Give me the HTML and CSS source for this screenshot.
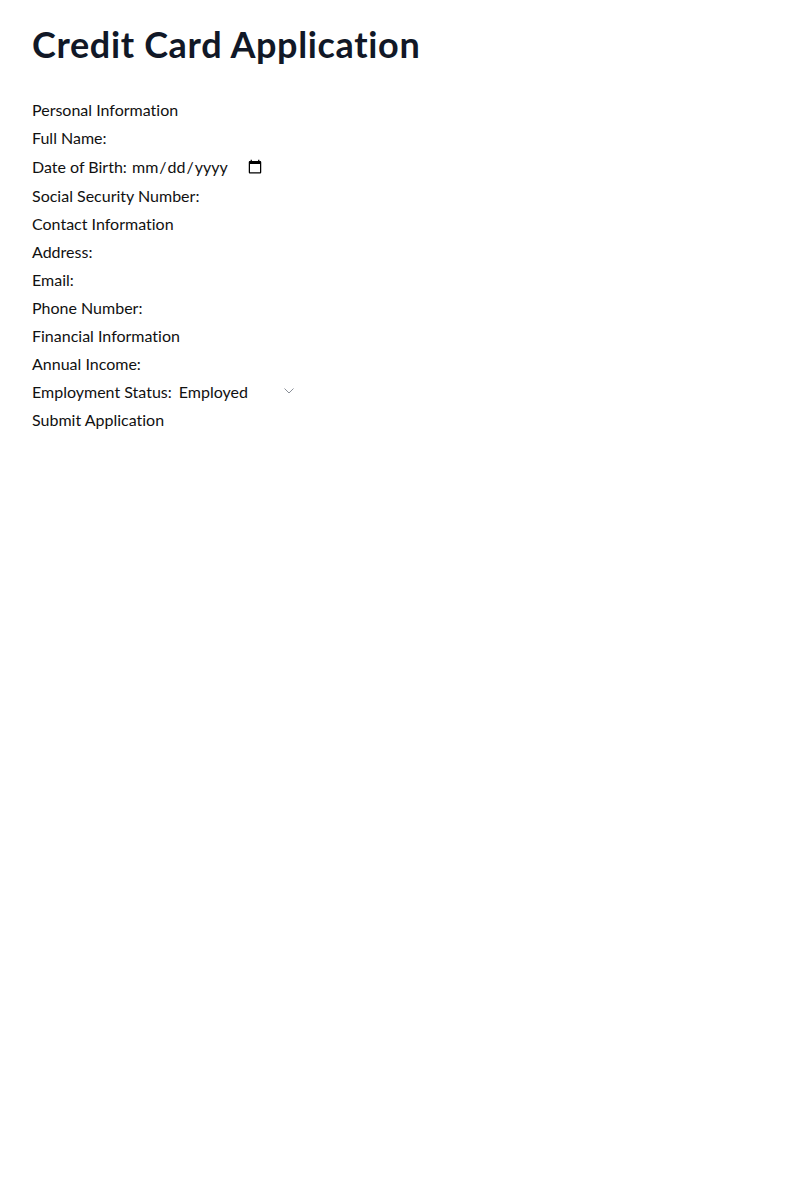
FILE: index.html
```html
<!DOCTYPE html>
<html>
<head>
<meta charset="utf-8">
<link rel="stylesheet" href="styles.css">
</head>
<body>
<main class="page">
  <h1 class="title">Credit Card Application</h1>
  <form class="form">
    <div class="row">Personal Information</div>
    <div class="row"><label>Full Name:</label> <input type="text" class="field"></div>
    <div class="row"><label>Date of Birth:</label> <input type="date" class="field date"></div>
    <div class="row"><label>Social Security Number:</label> <input type="text" class="field"></div>
    <div class="row">Contact Information</div>
    <div class="row"><label>Address:</label> <input type="text" class="field"></div>
    <div class="row"><label>Email:</label> <input type="email" class="field"></div>
    <div class="row"><label>Phone Number:</label> <input type="tel" class="field"></div>
    <div class="row">Financial Information</div>
    <div class="row"><label>Annual Income:</label> <input type="text" class="field"></div>
    <div class="row"><label>Employment Status:</label> <span class="select-wrap"><select class="field select"><option>Employed</option><option>Self-Employed</option><option>Unemployed</option></select><svg class="chev" width="10" height="6" viewBox="0 0 10 6"><path d="M0.5 0.5 L5 5 L9.5 0.5" fill="none" stroke="#8a8f98" stroke-width="1"/></svg></span></div>
    <div class="row"><button type="button" class="submit">Submit Application</button></div>
  </form>
</main>
</body>
</html>
```
FILE: styles.css
```css
html, body {
  margin: 0;
  padding: 0;
  background: #ffffff;
}
body {
  font-family: Lato, "Noto Sans", sans-serif;
  font-size: 16px;
  color: #111111;
  font-variant-ligatures: none;
  font-feature-settings: "liga" 0, "clig" 0;
}
.page {
  padding: 24px 32px;
}
.title {
  margin: 0 0 32px 0;
  font-size: 36px;
  line-height: 40px;
  font-weight: 700;
  letter-spacing: 0.65px;
  color: #111827;
}
.form {
  display: flex;
  flex-direction: column;
}
.row {
  line-height: 28px;
  min-height: 28px;
}
.field {
  border: none;
  background: transparent;
  font: inherit;
  color: inherit;
  padding: 0;
  margin: 0;
  outline: none;
  font-variant-ligatures: none;
  font-feature-settings: "liga" 0, "clig" 0;
}
.date {
  width: 134px;
}
.select-wrap {
  position: relative;
  display: inline-block;
}
.select {
  -webkit-appearance: none;
  appearance: none;
  width: 124px;
  padding-left: 3px;
}
.chev {
  position: absolute;
  right: 6px;
  top: 50%;
  margin-top: -4px;
  pointer-events: none;
}
.submit {
  border: none;
  background: transparent;
  font: inherit;
  color: inherit;
  padding: 0;
  margin: 0;
  cursor: pointer;
  font-variant-ligatures: none;
  font-feature-settings: "liga" 0, "clig" 0;
}
```
